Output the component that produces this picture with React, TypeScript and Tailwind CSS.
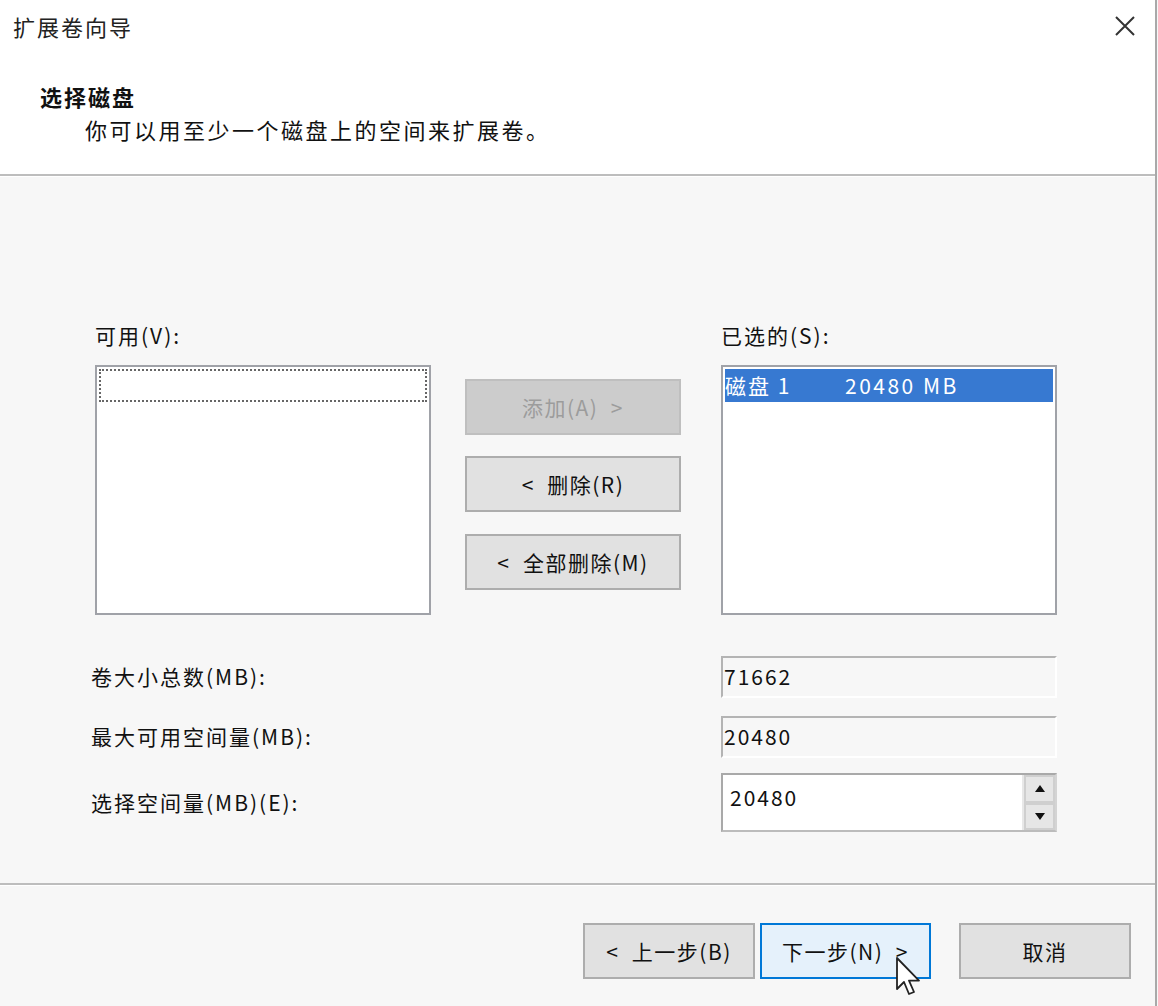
import React from "react";

const font = { fontFamily: '"Noto Sans CJK SC", "Noto Sans", sans-serif' };

function Btn({
  children,
  variant = "normal",
  className = "",
}: {
  children: React.ReactNode;
  variant?: "normal" | "disabled" | "hot";
  className?: string;
}) {
  const v =
    variant === "disabled"
      ? "bg-[#cccccc] border-[#bfbfbf] text-[#9c9c9c]"
      : variant === "hot"
      ? "bg-[#e5f1fb] border-[#0078d7] text-[#111]"
      : "bg-[#e1e1e1] border-[#adadad] text-[#111]";
  return (
    <div
      className={`flex items-center justify-center border-2 text-[21px] tracking-[1.5px] leading-none ${v} ${className}`}
    >
      {children}
    </div>
  );
}

export default function App() {
  return (
    <div
      style={font}
      className="w-[1158px] h-[1006px] flex flex-col bg-[#f7f7f7] text-[#111] overflow-hidden relative"
    >
      <div className="flex flex-1 flex-col border-r-2 border-[#a9a9a9] mr-[1px]">
        {/* Header */}
        <div className="h-[174px] bg-white flex flex-col">
          <div className="h-[52px] flex items-center justify-between pl-[13px] pr-[16px]">
            <span className="text-[22px] tracking-[2px] text-[#222]">扩展卷向导</span>
            <svg width="24" height="24" viewBox="0 0 24 24" className="mr-[2px]">
              <path d="M3 3 L21 21 M21 3 L3 21" stroke="#333" strokeWidth="2" />
            </svg>
          </div>
          <div className="pl-[40px] pt-[29px] text-[22px] tracking-[2px] font-bold leading-[30px]">
            选择磁盘
          </div>
          <div className="pl-[85px] pt-[3px] text-[22px] tracking-[2.5px] leading-[30px]">
            你可以用至少一个磁盘上的空间来扩展卷。
          </div>
        </div>
        <div className="h-[2px] bg-[#bdbdbd]" />
        <div className="h-[1px] bg-[#ffffff]" />

        {/* Body */}
        <div className="flex-1 flex flex-col pt-[143px] text-[21px] tracking-[2px]">
          <div className="flex pl-[95px]">
            {/* left column */}
            <div className="w-[336px] flex flex-col">
              <div className="h-[45px] leading-[30px]">可用(V):</div>
              <div className="h-[250px] bg-white border-2 border-[#a0a2a8] p-[2px]">
                <div className="h-[33px] border-2 border-dotted border-[#666]" />
              </div>
            </div>
            {/* middle column */}
            <div className="w-[216px] ml-[34px] pt-[59px] flex flex-col">
              <Btn variant="disabled" className="h-[56px]">
                添加(A)&nbsp;&nbsp;&gt;
              </Btn>
              <Btn className="h-[56px] mt-[21px]">&lt;&nbsp;&nbsp;删除(R)</Btn>
              <Btn className="h-[56px] mt-[22px]">&lt;&nbsp;&nbsp;全部删除(M)</Btn>
            </div>
            {/* right column */}
            <div className="w-[336px] ml-[40px] flex flex-col">
              <div className="h-[45px] leading-[30px]">已选的(S):</div>
              <div className="h-[250px] bg-white border-2 border-[#a0a2a8] p-[2px]">
                <div className="h-[33px] bg-[#3779d1] text-white flex items-center">
                  <span className="w-[120px]">磁盘 1</span>
                  <span className="tracking-[2.5px]">20480 MB</span>
                </div>
              </div>
            </div>
          </div>

          {/* Bottom rows */}
          <div className="flex flex-col pl-[91px] pt-[41px]">
            <div className="flex items-center h-[42px]">
              <div className="w-[630px]">卷大小总数(MB):</div>
              <div className="w-[336px] h-[42px] border-t-2 border-l-2 border-b-2 border-r-2 border-t-[#b4b4b4] border-l-[#b4b4b4] border-b-white border-r-white flex items-center pl-[1px]">
                71662
              </div>
            </div>
            <div className="flex items-center h-[42px] mt-[18px]">
              <div className="w-[630px]">最大可用空间量(MB):</div>
              <div className="w-[336px] h-[42px] border-t-2 border-l-2 border-b-2 border-r-2 border-t-[#b4b4b4] border-l-[#b4b4b4] border-b-white border-r-white flex items-center pl-[1px]">
                20480
              </div>
            </div>
            <div className="flex items-center h-[59px] mt-[15px]">
              <div className="w-[630px]">选择空间量(MB)(E):</div>
              <div className="w-[336px] h-[59px] bg-white border-2 border-t-[#a9a9a9] border-l-[#a9a9a9] border-b-[#bcbcbc] border-r-[#d4d4d4] flex">
                <div className="flex-1 pl-[7px] pt-[7px] leading-[30px]">20480</div>
                <div className="w-[33px] flex flex-col bg-[#f0f0f0] border-l-2 border-[#e8e8e8]">
                  <div className="flex-1 flex items-center justify-center bg-[#e6e6e6] border-2 border-[#cfcfcf]">
                    <svg width="10" height="7" viewBox="0 0 10 7">
                      <path d="M5 0 L10 7 L0 7 Z" fill="#111" />
                    </svg>
                  </div>
                  <div className="flex-1 flex items-center justify-center bg-[#e6e6e6] border-2 border-[#cfcfcf]">
                    <svg width="10" height="7" viewBox="0 0 10 7">
                      <path d="M0 0 L10 0 L5 7 Z" fill="#111" />
                    </svg>
                  </div>
                </div>
              </div>
            </div>
          </div>
        </div>

        <div className="h-[2px] bg-[#bdbdbd]" />
        <div className="h-[1px] bg-white" />

        {/* Footer */}
        <div className="h-[120px] flex items-start justify-end pt-[37px] pr-[24px]">
          <Btn className="w-[172px] h-[56px]">&lt;&nbsp;&nbsp;上一步(B)</Btn>
          <Btn variant="hot" className="w-[171px] h-[56px] ml-[5px]">
            下一步(N)&nbsp;&nbsp;&gt;
          </Btn>
          <Btn className="w-[172px] h-[56px] ml-[28px]">取消</Btn>
        </div>
      </div>

      {/* Mouse cursor */}
      <svg
        className="absolute left-[896px] top-[957px]"
        width="26"
        height="40"
        viewBox="0 0 13 20"
      >
        <path
          d="M0.5 0.5 L0.5 16 L4 12.5 L6.5 18.5 L9 17.5 L6.5 11.8 L11.5 11.8 Z"
          fill="white"
          stroke="#222"
          strokeWidth="0.9"
          strokeLinejoin="round"
        />
      </svg>
    </div>
  );
}
